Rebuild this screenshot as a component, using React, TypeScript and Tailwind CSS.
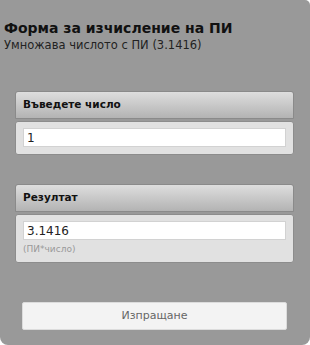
import React from 'react';

const Panel: React.FC<{ title: string; value: string; hint?: string; className?: string }> = ({ title, value, hint, className = '' }) => (
  <div className={className}>
    <div className="h-[28px] flex items-center px-[7px] rounded-t-[3px] border border-[#8a8a8a] bg-gradient-to-b from-[#dedede] to-[#b3b3b3] text-[10.5px] font-bold text-[#111]">
      {title}
    </div>
    <div className="mt-[2px] rounded-[3px] border border-[#8c8c8c] bg-[#e1e1e1] px-[7px] pt-[6px] pb-[7px]">
      <input
        readOnly
        value={value}
        className="block w-full h-[19px] bg-white border border-[#d2d2d2] px-[3px] text-[12px] text-[#222] outline-none"
      />
      {hint && <div className="mt-[4px] text-[9px] leading-[11px] text-[#999]">{hint}</div>}
    </div>
  </div>
);

export default function App() {
  return (
    <div className="w-[310px] h-[345px] bg-white" style={{ fontFamily: '"DejaVu Sans", Verdana, sans-serif' }}>
      <div className="h-full bg-[#999999] rounded-b-[8px] rounded-tr-[5px] pt-[19px]">
        <div className="pl-[4px]">
          <h1 className="text-[14px] leading-[18px] font-bold text-[#111]">Форма за изчисление на ПИ</h1>
          <p className="text-[11.5px] leading-[15px] text-[#222] mt-[1px]">Умножава числото с ПИ (3.1416)</p>
        </div>
        <Panel title="Въведете число" value="1" className="mt-[38px] ml-[15px] mr-[16px]" />
        <Panel title="Резултат" value="3.1416" hint="(ПИ*число)" className="mt-[29px] ml-[15px] mr-[16px]" />
        <div className="mt-[39px] px-[22px]">
          <button className="w-[265px] h-[28px] bg-[#f3f3f3] border border-[#dcdcdc] rounded-[2px] text-[11px] text-[#666]">
            Изпращане
          </button>
        </div>
      </div>
    </div>
  );
}
